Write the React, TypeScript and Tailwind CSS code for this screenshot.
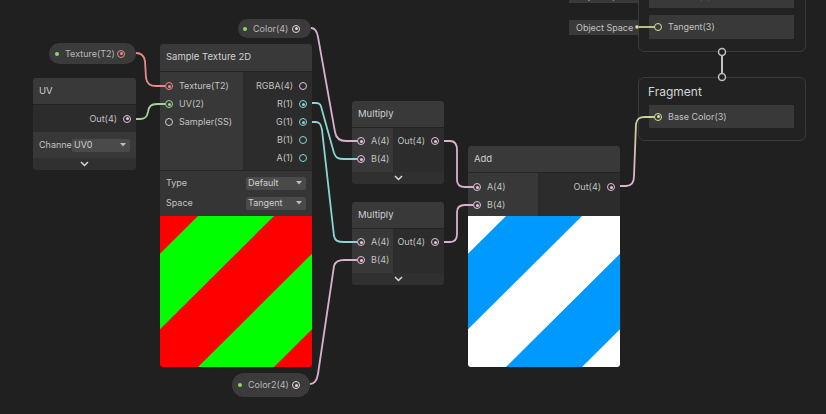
import React from "react";

type Kind = "tex" | "v2" | "ss" | "v4" | "f" | "v3" | "prop";

const ringCls: Record<Kind, string> = {
  tex: "border-[#e98b8f]",
  v2: "border-[#9fd59a]",
  ss: "border-[#cfcfcf]",
  v4: "border-[#e7c0dc]",
  f: "border-[#86d6d3]",
  v3: "border-[#dfe39c]",
  prop: "border-[#e4d3df]",
};

const dotCls: Record<Kind, string> = {
  tex: "bg-[#e98b8f]",
  v2: "bg-[#9fd59a]",
  ss: "bg-[#cfcfcf]",
  v4: "bg-[#e7c0dc]",
  f: "bg-[#86d6d3]",
  v3: "bg-[#dfe39c]",
  prop: "bg-[#e4d3df]",
};

function Port({ kind, filled }: { kind: Kind; filled?: boolean }) {
  return (
    <span
      className={`flex h-[8px] w-[8px] shrink-0 items-center justify-center rounded-full border-[1.5px] ${ringCls[kind]}`}
    >
      {filled && <span className={`h-[3px] w-[3px] rounded-full ${dotCls[kind]}`} />}
    </span>
  );
}

function InRow({ label, kind, filled }: { label: string; kind: Kind; filled?: boolean }) {
  return (
    <div className="flex h-[18px] items-center gap-[6px] pl-[5px]">
      <Port kind={kind} filled={filled} />
      <span className="whitespace-nowrap text-[9px] text-[#c2c2c2]">{label}</span>
    </div>
  );
}

function OutRow({ label, kind, filled }: { label: string; kind: Kind; filled?: boolean }) {
  return (
    <div className="flex h-[18px] items-center justify-end gap-[6px] pr-[5px]">
      <span className="whitespace-nowrap text-[9px] text-[#c2c2c2]">{label}</span>
      <Port kind={kind} filled={filled} />
    </div>
  );
}

function Title({ text, h }: { text: string; h: string }) {
  return (
    <div className={`flex ${h} items-center border-b border-[#242424] bg-[#393939] pl-[6px] text-[9.5px] text-[#d0d0d0]`}>
      {text}
    </div>
  );
}

function Chevron() {
  return (
    <div className="flex h-[12px] items-center justify-center bg-[#303030]">
      <svg width="9" height="6" viewBox="0 0 9 6">
        <path d="M1 1 L4.5 4.5 L8 1" fill="none" stroke="#d8d8d8" strokeWidth="1.5" />
      </svg>
    </div>
  );
}

function Dropdown({ value, w }: { value: string; w: string }) {
  return (
    <div className={`flex h-[13px] ${w} items-center justify-between rounded-[2px] bg-[#4a4a4a] pl-[2px] pr-[4px] text-[9px] text-[#cfcfcf]`}>
      <span>{value}</span>
      <svg width="6" height="4" viewBox="0 0 6 4">
        <path d="M0 0 H6 L3 3.5 Z" fill="#bdbdbd" />
      </svg>
    </div>
  );
}

function Stripes({ a, b }: { a: string; b: string }) {
  return (
    <svg className="block h-[151px] w-full" viewBox="0 0 150 150" preserveAspectRatio="none">
      <rect width="150" height="150" fill={a} />
      <polygon points="37.5,0 112.5,0 0,112.5 0,37.5" fill={b} />
      <polygon points="150,37.5 150,112.5 112.5,150 37.5,150" fill={b} />
    </svg>
  );
}

function Pill({ cls, label, pad }: { cls: string; label: string; pad: string }) {
  return (
    <div className={`absolute flex items-center rounded-full bg-[#3b3b3b] ${cls} ${pad}`}>
      <span className="h-[4px] w-[4px] rounded-full bg-[#8fd46a]" />
      <span className="ml-[6px] flex-1 whitespace-nowrap text-[9px] text-[#b9b9b9]">{label}</span>
      <Port kind={label.startsWith("Texture") ? "tex" : "prop"} filled />
    </div>
  );
}

const wires = [
  { d: "M136 53 C141 53 144 55 145 61 L146 78 C147 84 150 86 156 86 H165", c: "#e68a8e" },
  { d: "M136 119 H140 C145 119 147 117 148 112 C149 106 151 104 157 104 H165", c: "#a3d29b" },
  { d: "M311 28 C315 28 317 31 318 37 L335 132 C336 138 339 141 346 141 H357", c: "#d9b0cf" },
  { d: "M312 103 H316 C320 103 321 105 322 110 L334 153 C336 158 338 159 344 159 H357", c: "#8ad4d1" },
  { d: "M312 122 H316 C320 122 321 125 322 130 L334 236 C335 241 338 242 344 242 H357", c: "#8ad4d1" },
  { d: "M310 384 C315 384 317 380 318 374 L334 266 C335 262 338 260 344 260 H357", c: "#d9b0cf" },
  { d: "M444 141 H450 C455 141 457 144 457 150 V180 C457 185 460 187 465 187 H474", c: "#d9b0cf" },
  { d: "M444 242 H450 C455 242 457 239 457 234 V212 C457 207 460 205 465 205 H474", c: "#d9b0cf" },
];

export default function App() {
  return (
    <div className="relative h-[414px] w-[826px] overflow-hidden bg-[#202020] font-['Inter','Noto_Sans',sans-serif]">
      {/* property pills */}
      <Pill cls="left-[49px] top-[43px] h-[21px] w-[87px]" pad="pl-[6px] pr-[11px]" label="Texture(T2)" />
      <Pill cls="left-[238px] top-[19px] h-[19px] w-[73px]" pad="pl-[5px] pr-[11px]" label="Color(4)" />
      <Pill cls="left-[232px] top-[373px] h-[24px] w-[78px]" pad="pl-[6px] pr-[10px]" label="Color2(4)" />

      {/* UV */}
      <div className="absolute left-[33px] top-[78px] w-[103px] overflow-hidden rounded-[3px]">
        <Title text="UV" h="h-[27px]" />
        <div className="flex h-[27px] flex-col justify-center bg-[#2c2c2c]">
          <OutRow label="Out(4)" kind="v4" filled />
        </div>
        <div className="flex h-[26px] items-center bg-[#383838] pl-[6px]">
          <span className="w-[33px] overflow-hidden whitespace-nowrap text-[9px] text-[#c2c2c2]">Channel</span>
          <Dropdown value="UV0" w="w-[58px]" />
        </div>
        <Chevron />
      </div>

      {/* Sample Texture 2D */}
      <div className="absolute left-[160px] top-[44px] w-[152px] overflow-hidden rounded-[3px]">
        <Title text="Sample Texture 2D" h="h-[28px]" />
        <div className="flex h-[98px]">
          <div className="w-[83px] bg-[#383838] pt-[5px]">
            <InRow label="Texture(T2)" kind="tex" filled />
            <InRow label="UV(2)" kind="v2" filled />
            <InRow label="Sampler(SS)" kind="ss" />
          </div>
          <div className="flex-1 bg-[#2c2c2c] pt-[5px]">
            <OutRow label="RGBA(4)" kind="v4" />
            <OutRow label="R(1)" kind="f" filled />
            <OutRow label="G(1)" kind="f" filled />
            <OutRow label="B(1)" kind="f" />
            <OutRow label="A(1)" kind="f" />
          </div>
        </div>
        <div className="h-[46px] border-t border-[#262626] bg-[#353535] px-[6px] pt-[2px]">
          <div className="flex h-[20px] items-center justify-between">
            <span className="text-[9px] text-[#c2c2c2]">Type</span>
            <Dropdown value="Default" w="w-[60px]" />
          </div>
          <div className="flex h-[20px] items-center justify-between">
            <span className="text-[9px] text-[#c2c2c2]">Space</span>
            <Dropdown value="Tangent" w="w-[60px]" />
          </div>
        </div>
        <Stripes a="#ff0000" b="#00ff00" />
      </div>

      {/* Multiply 1 */}
      <div className="absolute left-[352px] top-[101px] w-[92px] overflow-hidden rounded-[3px]">
        <Title text="Multiply" h="h-[27px]" />
        <div className="flex h-[44px]">
          <div className="w-[41px] bg-[#383838] pt-[4px]">
            <InRow label="A(4)" kind="v4" filled />
            <InRow label="B(4)" kind="v4" filled />
          </div>
          <div className="flex-1 bg-[#2c2c2c] pt-[4px]">
            <OutRow label="Out(4)" kind="v4" filled />
          </div>
        </div>
        <Chevron />
      </div>

      {/* Multiply 2 */}
      <div className="absolute left-[352px] top-[202px] w-[92px] overflow-hidden rounded-[3px]">
        <Title text="Multiply" h="h-[27px]" />
        <div className="flex h-[44px]">
          <div className="w-[41px] bg-[#383838] pt-[4px]">
            <InRow label="A(4)" kind="v4" filled />
            <InRow label="B(4)" kind="v4" filled />
          </div>
          <div className="flex-1 bg-[#2c2c2c] pt-[4px]">
            <OutRow label="Out(4)" kind="v4" filled />
          </div>
        </div>
        <Chevron />
      </div>

      {/* Add */}
      <div className="absolute left-[468px] top-[146px] w-[152px] overflow-hidden rounded-[3px]">
        <Title text="Add" h="h-[27px]" />
        <div className="flex h-[43px]">
          <div className="w-[70px] bg-[#383838] pt-[5px]">
            <InRow label="A(4)" kind="v4" filled />
            <InRow label="B(4)" kind="v4" filled />
          </div>
          <div className="flex-1 bg-[#2c2c2c] pt-[5px]">
            <OutRow label="Out(4)" kind="v4" filled />
          </div>
        </div>
        <Stripes a="#ffffff" b="#0099ff" />
      </div>

      {/* Object Space inputs */}
      <div className="absolute left-[569px] top-[-12px] flex h-[15px] w-[76px] items-center bg-[#393939] pl-[7px] text-[9px] text-[#c2c2c2]">
        Object Space
      </div>
      <div className="absolute left-[569px] top-[20px] flex h-[15px] w-[76px] items-center bg-[#393939] pl-[7px] text-[9px] text-[#c2c2c2]">
        Object Space
      </div>

      {/* Vertex block */}
      <div className="absolute left-[638px] top-[-40px] flex h-[92px] w-[168px] flex-col justify-end gap-[7px] rounded-[6px] border border-[#3a3a3a] bg-[#222222] pb-[12px] pl-[10px] pr-[11px]">
        <div className="flex h-[24px] items-center gap-[6px] bg-[#393939] pl-[5px]">
          <Port kind="v3" />
          <span className="text-[9px] text-[#c2c2c2]">Normal(3)</span>
        </div>
        <div className="flex h-[24px] items-center gap-[6px] bg-[#393939] pl-[5px]">
          <Port kind="v3" />
          <span className="text-[9px] text-[#c2c2c2]">Tangent(3)</span>
        </div>
      </div>

      {/* Fragment block */}
      <div className="absolute left-[638px] top-[77px] h-[64px] w-[168px] rounded-[6px] border border-[#3a3a3a] bg-[#222222] pl-[10px] pr-[11px] pt-[6px]">
        <div className="-ml-[1px] flex h-[16px] items-center text-[12px] text-[#d4d4d4]">Fragment</div>
        <div className="mt-[5px] flex h-[23px] items-center gap-[6px] bg-[#393939] pl-[5px]">
          <Port kind="v3" filled />
          <span className="text-[9px] text-[#c2c2c2]">Base Color(3)</span>
        </div>
      </div>

      {/* wires */}
      <svg className="pointer-events-none absolute inset-0" width="826" height="414">
        <defs>
          <linearGradient id="addOut" gradientUnits="userSpaceOnUse" x1="0" y1="186" x2="0" y2="117">
            <stop offset="0" stopColor="#d9b0cf" />
            <stop offset="1" stopColor="#cfd092" />
          </linearGradient>
        </defs>
        {wires.map((w, i) => (
          <path key={i} d={w.d} fill="none" stroke={w.c} strokeWidth="1.8" />
        ))}
        <path
          d="M620 186 H626 C632 186 634 182 634 176 L636 124 C637 119 639 117 645 117 H654"
          fill="none"
          stroke="url(#addOut)"
          strokeWidth="1.8"
        />
        <rect x="635.5" y="25.5" width="3" height="3" fill="#dfe39c" />
        <path d="M639 27 H654" stroke="#cfd092" strokeWidth="1.8" />
        <path d="M722 55.5 V73.5" stroke="#c4c4c4" strokeWidth="2" />
        <circle cx="722" cy="52" r="3.5" fill="#222222" stroke="#bdbdbd" strokeWidth="1.5" />
        <circle cx="722" cy="77" r="3.5" fill="#222222" stroke="#bdbdbd" strokeWidth="1.5" />
      </svg>
    </div>
  );
}
